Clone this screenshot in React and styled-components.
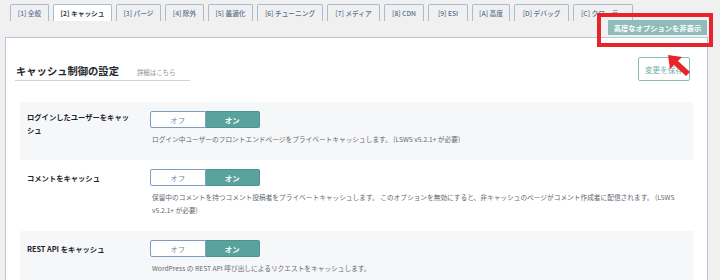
import React from 'react';
import styled, { createGlobalStyle } from 'styled-components';

const GlobalStyle = createGlobalStyle`
  html, body {
    margin: 0;
    padding: 0;
    background: #f0f0f1;
  }
  body {
    font-family: "Noto Sans CJK JP", "Liberation Sans", sans-serif;
  }
`;

const Page = styled.div`
  position: relative;
  width: 720px;
  height: 280px;
  overflow: hidden;
  background: #f0f0f1;
`;

const TabBar = styled.nav`
  display: flex;
  gap: 4px;
  padding: 4px 0 0 10px;
  height: 17px;
`;

const Tab = styled.div`
  display: flex;
  align-items: center;
  justify-content: center;
  box-sizing: border-box;
  width: ${(p) => p.w}px;
  height: 17px;
  border: 1px solid #a9bbd2;
  border-bottom: none;
  border-radius: 2px 2px 0 0;
  background: ${(p) => (p.active ? '#fff' : '#f0f0f1')};
  color: ${(p) => (p.active ? '#2c3338' : '#58708f')};
  font-size: 6.7px;
  font-weight: ${(p) => (p.active ? 600 : 500)};
  white-space: nowrap;
  overflow: hidden;
`;

const ActionBar = styled.div`
  display: flex;
  justify-content: flex-end;
  padding-right: 13px;
  margin-top: -1px;
`;

const AdvancedButton = styled.button`
  width: 99px;
  height: 15px;
  padding: 0;
  border: none;
  border-radius: 1px 1px 0 0;
  background: #8fbcb9;
  color: #fff;
  font-family: inherit;
  font-size: 7.3px;
  font-weight: 700;
  white-space: nowrap;
`;

const Panel = styled.section`
  margin: 2px 12px 0 5px;
  padding: 19px 14px 0 9px;
  height: 260px;
  box-sizing: border-box;
  background: #fff;
  border: 1px solid #b8c6d8;
  border-bottom: none;
`;

const Header = styled.div`
  display: flex;
  justify-content: space-between;
  align-items: flex-end;
`;

const TitleBlock = styled.div`
  display: flex;
  align-items: baseline;
  gap: 18px;
  width: 174px;
  padding: 0 0 2px 1px;
  border-bottom: 1px solid #c9d3e0;
`;

const Title = styled.h2`
  margin: 0;
  font-size: 10.3px;
  font-weight: 700;
  color: #23282d;
  line-height: 14px;
`;

const DocLink = styled.span`
  font-size: 6.4px;
  color: #8c9299;
`;

const SaveButton = styled.button`
  width: 52px;
  height: 24px;
  margin-right: 3px;
  padding: 0;
  box-sizing: border-box;
  border: 1px solid #82bdb9;
  border-radius: 2px;
  background: #fff;
  color: #72aeaa;
  font-family: inherit;
  font-size: 7.6px;
  white-space: nowrap;
`;

const Settings = styled.div`
  margin: 21px 0 0 5px;
`;

const Row = styled.div`
  display: grid;
  grid-template-columns: 123px 1fr;
  padding: 9px 7px 14px;
  background: ${(p) => (p.shaded ? '#f6f7f9' : '#fff')};
`;

const Label = styled.div`
  padding: ${(p) => (p.tall ? '0' : '3px')} 14px 0 0;
  font-size: 7.3px;
  font-weight: 700;
  line-height: 13px;
  color: #1d2327;
`;

const Field = styled.div`
  display: flex;
  flex-direction: column;
  align-items: flex-start;
`;

const Toggle = styled.div`
  display: flex;
  width: 110px;
  height: 17px;
`;

const ToggleSide = styled.div`
  flex: 1;
  display: flex;
  align-items: center;
  justify-content: center;
  box-sizing: border-box;
  font-size: 7.4px;
  font-weight: ${(p) => (p.on ? 700 : 400)};
  color: ${(p) => (p.on ? '#fff' : '#6d8cae')};
  background: ${(p) => (p.on ? '#5aa29e' : '#fff')};
  border: 1px solid ${(p) => (p.on ? '#4d938f' : '#7f9cc0')};
  border-radius: ${(p) => (p.on ? '0 2px 2px 0' : '2px 0 0 2px')};
  ${(p) => (p.on ? 'border-left: none;' : '')}
`;

const Description = styled.p`
  margin: 5px 0 0;
  padding-left: 2px;
  font-size: 6.7px;
  line-height: 13px;
  color: #646970;
`;

const Highlight = styled.div`
  position: absolute;
  left: 597px;
  top: 13px;
  width: 116px;
  height: 34px;
  box-sizing: border-box;
  border: 4px solid #e8242b;
`;

const Pointer = styled.svg`
  position: absolute;
  left: 664px;
  top: 52px;
`;

const tabs = [
  { label: '[1] 全般', w: 39 },
  { label: '[2] キャッシュ', w: 59, active: true },
  { label: '[3] パージ', w: 45 },
  { label: '[4] 除外', w: 39 },
  { label: '[5] 最適化', w: 45 },
  { label: '[6] チューニング', w: 66 },
  { label: '[7] メディア', w: 53 },
  { label: '[8] CDN', w: 40 },
  { label: '[9] ESI', w: 40 },
  { label: '[A] 高度', w: 38 },
  { label: '[D] デバッグ', w: 55 },
  { label: '[C] クローラー', w: 60 },
];

const settings = [
  {
    label: 'ログインしたユーザーをキャッシュ',
    tall: true,
    desc: 'ログイン中ユーザーのフロントエンドページをプライベートキャッシュします。 (LSWS v5.2.1+ が必要)',
    shaded: true,
  },
  {
    label: 'コメントをキャッシュ',
    desc: '保留中のコメントを持つコメント投稿者をプライベートキャッシュします。 このオプションを無効にすると、非キャッシュのページがコメント作成者に配信されます。 (LSWS v5.2.1+ が必要)',
  },
  {
    label: 'REST API をキャッシュ',
    desc: 'WordPress の REST API 呼び出しによるリクエストをキャッシュします。',
    shaded: true,
  },
];

const App = () => {
  return (
    <Page>
      <GlobalStyle />
      <TabBar>
        {tabs.map((t) => (
          <Tab key={t.label} w={t.w} active={t.active}>
            {t.label}
          </Tab>
        ))}
      </TabBar>
      <ActionBar>
        <AdvancedButton>高度なオプションを非表示</AdvancedButton>
      </ActionBar>
      <Panel>
        <Header>
          <TitleBlock>
            <Title>キャッシュ制御の設定</Title>
            <DocLink>詳細はこちら</DocLink>
          </TitleBlock>
          <SaveButton>変更を保存</SaveButton>
        </Header>
        <Settings>
          {settings.map((s) => (
            <Row key={s.label} shaded={s.shaded}>
              <Label tall={s.tall}>{s.label}</Label>
              <Field>
                <Toggle>
                  <ToggleSide>オフ</ToggleSide>
                  <ToggleSide on>オン</ToggleSide>
                </Toggle>
                <Description>{s.desc}</Description>
              </Field>
            </Row>
          ))}
        </Settings>
      </Panel>
      <Highlight />
      <Pointer width="30" height="26" viewBox="0 0 30 26">
        <polygon points="4,3 18,5 14,9 26,20 22,24 10,13 6,17" fill="#e8242b" />
      </Pointer>
    </Page>
  );
};

export default App;
